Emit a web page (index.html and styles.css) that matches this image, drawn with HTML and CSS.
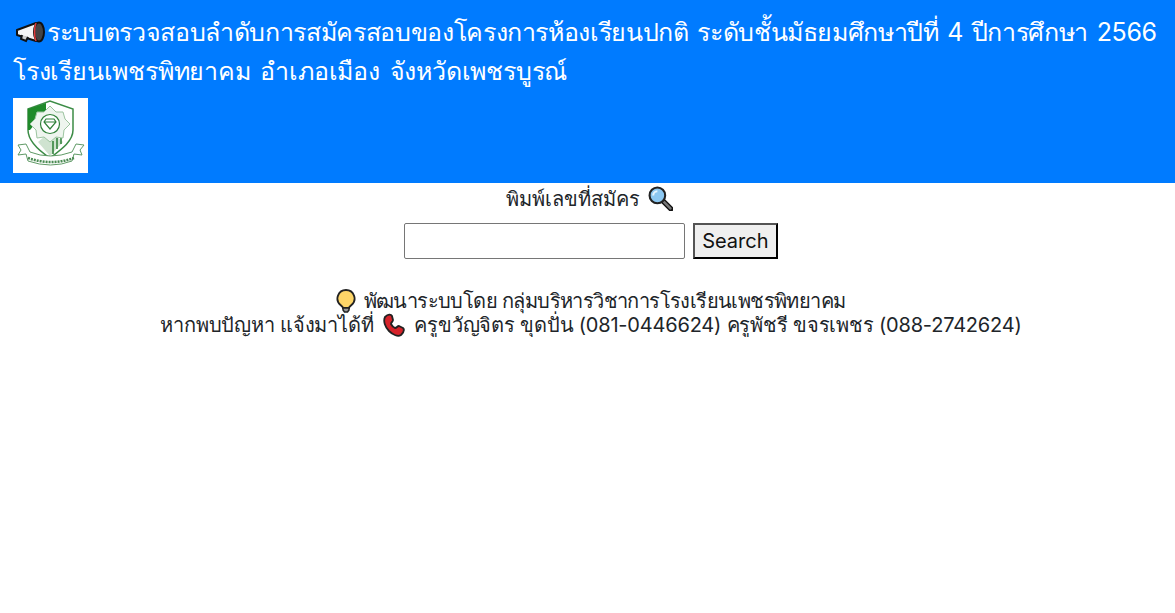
FILE: index.html
```html
<!DOCTYPE html>
<html lang="th">
<head>
  <meta charset="UTF-8">
  <title>ระบบตรวจสอบลำดับการสมัครสอบ</title>
  <link rel="stylesheet" href="styles.css">
</head>
<body>
  <header class="banner">
    <h1 class="banner-title">
      <span class="title-line title-first"><svg class="icon-horn" viewBox="0 0 30 22"><path d="M2 9 21 2v18L2 14z" fill="#f4f4f4" stroke="#111" stroke-width="2" stroke-linejoin="round"/><path d="M7 14l-1 4 5 2 2-4" fill="#ccc" stroke="#111" stroke-width="2"/><ellipse cx="24" cy="11" rx="5" ry="9.5" fill="#444" stroke="#111" stroke-width="2"/><path d="M21 2c-2 5-2 13 0 18" fill="none" stroke="#e03a3a" stroke-width="1.5"/></svg>ระบบตรวจสอบลำดับการสมัครสอบของโครงการห้องเรียนปกติ ระดับชั้นมัธยมศึกษาปีที่ 4 ปีการศึกษา 2566</span>
      <span class="title-line title-second">โรงเรียนเพชรพิทยาคม อำเภอเมือง จังหวัดเพชรบูรณ์</span>
    </h1>
    <svg class="logo" viewBox="0 0 75 75">
      <rect width="75" height="75" fill="#fff"/>
      <path d="M15 11 37 3l23 8v21c0 11-11 19-23 28C25 52 15 43 15 32z" fill="#fff" stroke="#3c8c46" stroke-width="1.5"/>
      <path d="M15 11 33 5v8L17 32h-2z" fill="#1f8a2a"/>
      <path d="M25 44 37 58l13-14-7-6H32z" fill="#cfe3d0"/>
      <path d="M40 43v13M44 40v11M48 40v6" stroke="#2b7f35" stroke-width="1.5"/>
      <path d="M37 8l6 6h7l2 7 5 5-6 6-1 8-7-1-6 5-6-5-7 1-1-8-6-6 5-5 2-7h7z" fill="#eef5ee" stroke="#9cc4a0"/>
      <circle cx="37" cy="26" r="9.500" fill="#fff" stroke="#2f8039" stroke-width="1.200"/>
      <path d="M31 24l2-3h8l2 3-6 7zM31 24h12" fill="none" stroke="#2f8039" stroke-width="1.200"/>
      <path d="M5 47l8-1 4 8q20 8 42 0l4-8 8 1-4 5 2 5-8-1-2 7q-21 8-44 0l-2-7-8 1 3-5z" fill="#fff" stroke="#5f9a66"/>
      <path d="M15 60q23 8 46 0" fill="none" stroke="#4a8a52" stroke-width="2.500" stroke-dasharray="2 1"/>
    </svg>
  </header>
  <main class="search-area">
    <div class="search-label">พิมพ์เลขที่สมัคร <svg class="emoji emoji-search" viewBox="0 0 24 24"><path d="M15 15l7 7" stroke="#111" stroke-width="5" stroke-linecap="round"/><path d="M15.500 15.500l6 6" stroke="#777" stroke-width="2.500" stroke-linecap="round"/><circle cx="9" cy="9" r="7.500" fill="#8cc8f2" stroke="#222" stroke-width="2"/><path d="M5 9a4 4 0 0 1 4-4" fill="none" stroke="#e6f5ff" stroke-width="2"/></svg></div>
    <form class="search-form">
      <input class="search-input" type="text">
      <button class="search-btn" type="button">Search</button>
    </form>
    <p class="credit">
      <span class="credit-top"><svg class="emoji emoji-bulb" viewBox="3 0 18 24"><path d="M12 1a8.500 8.500 0 0 0-5.500 15c1 1 2.500 2 2.500 3h6c0-1 1.500-2 2.500-3A8.500 8.500 0 0 0 12 1z" fill="#fdd568" stroke="#222" stroke-width="1.800"/><path d="M9 19h6v2l-1.500 2h-3L9 21z" fill="#999" stroke="#222" stroke-width="1.500"/></svg> พัฒนาระบบโดย กลุ่มบริหารวิชาการโรงเรียนเพชรพิทยาคม</span><br>
      หากพบปัญหา แจ้งมาได้ที่ <svg class="emoji" viewBox="0 0 24 24"><path d="M3 4c3-3 6-3 7-1l1 4c0 2-2 2-2 4 1 2 2 3 4 4 2 0 2-2 4-2l4 2c2 2 0 5-2 7-3 2-8 0-12-4S1 8 3 4z" fill="#d6232a" stroke="#222" stroke-width="1.800" stroke-linejoin="round"/></svg> ครูขวัญจิตร ขุดปั่น (081-0446624) ครูพัชรี ขจรเพชร (088-2742624)
    </p>
  </main>
</body>
</html>
```
FILE: styles.css
```css
body {
  margin: 0;
  background: #fff;
  color: #212529;
  font-family: "Inter", "Noto Sans", sans-serif;
  font-size: 20px;
  line-height: 24px;
}
.banner {
  background: #007bff;
  color: #fff;
  padding: 13px 13px 10px;
}
.banner-title {
  margin: 0;
  font-size: 25px;
  font-weight: 400;
  line-height: 39px;
}
.title-line {
  display: block;
  white-space: nowrap;
  word-spacing: 2px;
}
.title-first {
  letter-spacing: -0.35px;
}
.title-second {
  letter-spacing: -0.2px;
  word-spacing: 3px;
}
.icon-horn {
  width: 30px;
  height: 22px;
  margin: 0 2px;
  vertical-align: -2px;
}
.logo {
  display: block;
  width: 75px;
  height: 75px;
  margin-top: 7px;
}
.search-area {
  padding-left: 7px;
  text-align: center;
}
.search-label {
  padding-top: 3px;
}
.emoji {
  width: 24px;
  height: 24px;
  margin: 0 3px;
  vertical-align: -5px;
}
.emoji-search {
  width: 25px;
  height: 25px;
}
.emoji-bulb {
  width: 20px;
}
.search-form {
  margin-top: 12px;
}
.search-input {
  box-sizing: border-box;
  width: 281px;
  height: 36px;
  padding: 1px 2px;
  border: 1px solid #767676;
  border-radius: 2px;
  vertical-align: top;
}
.search-btn {
  box-sizing: border-box;
  width: 85px;
  height: 36px;
  margin-left: 2px;
  padding: 0;
  font: inherit;
  color: #111;
  background: #efefef;
  border: 2px outset #000;
  vertical-align: top;
}
.credit {
  margin: 30px 0 0;
  letter-spacing: -0.2px;
}
.credit-top {
  padding-right: 4px;
  letter-spacing: -0.6px;
}
```
